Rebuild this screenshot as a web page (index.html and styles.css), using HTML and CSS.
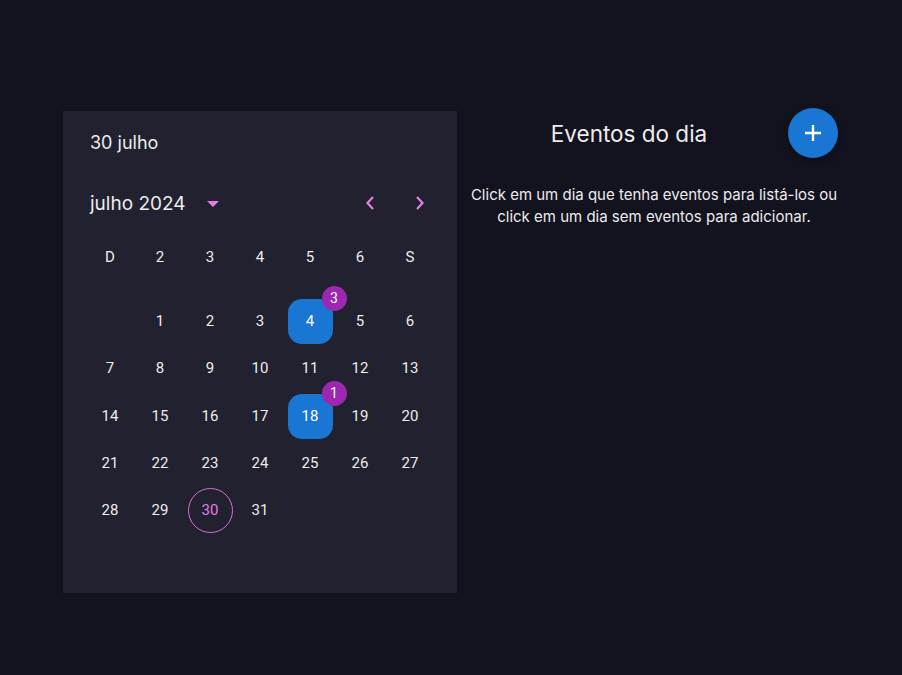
FILE: index.html
```html
<!DOCTYPE html>
<html lang="pt">
<head>
<meta charset="utf-8">
<link rel="stylesheet" href="styles.css">
</head>
<body>
<div class="page">
  <section class="calendar">
    <div class="selected">30 julho</div>
    <div class="month-bar">
      <div class="month-label">julho 2024</div>
      <svg class="drop" width="12" height="6" viewBox="0 0 12 6"><path d="M0 0 L12 0 L6 6 Z" fill="#e27ee6"/></svg>
      <div class="nav">
        <svg width="10" height="16" viewBox="0 0 10 16"><path d="M8 2 L2.5 8 L8 14" fill="none" stroke="#e27ee6" stroke-width="2.2"/></svg>
        <svg width="10" height="16" viewBox="0 0 10 16"><path d="M2 2 L7.5 8 L2 14" fill="none" stroke="#e27ee6" stroke-width="2.2"/></svg>
      </div>
    </div>
    <div class="weekdays">
      <span>D</span><span>2</span><span>3</span><span>4</span><span>5</span><span>6</span><span>S</span>
    </div>
    <div class="days">
      <span></span><span>1</span><span>2</span><span>3</span><span class="event">4<b class="badge">3</b></span><span>5</span><span>6</span>
      <span>7</span><span>8</span><span>9</span><span>10</span><span>11</span><span>12</span><span>13</span>
      <span>14</span><span>15</span><span>16</span><span>17</span><span class="event">18<b class="badge">1</b></span><span>19</span><span>20</span>
      <span>21</span><span>22</span><span>23</span><span>24</span><span>25</span><span>26</span><span>27</span>
      <span>28</span><span>29</span><span class="today">30</span><span>31</span>
    </div>
  </section>
  <section class="events">
    <div class="events-head">
      <h2 class="title">Eventos do dia</h2>
      <button class="add" type="button">
        <svg width="20" height="20" viewBox="0 0 20 20"><path d="M10 2 V18 M2 10 H18" stroke="#fff" stroke-width="2.4" fill="none"/></svg>
      </button>
    </div>
    <p class="hint">Click em um dia que tenha eventos para listá-los ou click em um dia sem eventos para adicionar.</p>
  </section>
</div>
</body>
</html>
```
FILE: styles.css
```css
html, body {
  margin: 0;
  background: #13121f;
  color: #ececec;
}
.page {
  display: flex;
  padding: 111px 0 0 63px;
}
.calendar {
  box-sizing: border-box;
  width: 394px;
  height: 482px;
  background: #22212f;
  padding: 21px 22px 0;
  font-family: Roboto, "Liberation Sans", sans-serif;
}
.selected {
  font-family: Inter, "Noto Sans", sans-serif;
  font-size: 18px;
  line-height: 22px;
  padding-left: 5px;
}
.month-bar {
  display: flex;
  align-items: center;
  height: 40px;
  margin-top: 29px;
  padding-left: 5px;
}
.month-label {
  font-size: 19px;
  font-family: Inter, "Noto Sans", sans-serif;
}
.drop {
  margin-left: 21px;
  margin-top: 2px;
}
.nav {
  margin-left: auto;
  display: flex;
  gap: 40px;
  margin-right: 10px;
}
.weekdays, .days {
  display: grid;
  grid-template-columns: repeat(7, 50px);
}
.weekdays {
  margin-top: 14px;
  height: 40px;
  align-items: center;
  font-size: 15px;
}
.weekdays span, .days span {
  text-align: center;
}
.days {
  margin-top: 22px;
  grid-auto-rows: 47.25px;
  font-size: 15px;
}
.days span {
  position: relative;
  justify-self: center;
  width: 45px;
  height: 45px;
  line-height: 45px;
  box-sizing: border-box;
}
.days .event {
  background: #1976d2;
  border-radius: 14px;
  color: #fff;
}
.days .today {
  border: 1px solid #d86bdc;
  border-radius: 50%;
  color: #e27ee6;
  line-height: 43px;
}
.badge {
  position: absolute;
  top: -13px;
  right: -14px;
  width: 25px;
  height: 25px;
  border-radius: 50%;
  background: #9c27b0;
  color: #fff;
  font-weight: 400;
  font-size: 14px;
  line-height: 25px;
  text-align: center;
}
.events {
  width: 392px;
  margin-left: 1px;
  font-family: Inter, "Noto Sans", sans-serif;
}
.events-head {
  display: flex;
  align-items: center;
  padding: 0 12px 0 12px;
  margin-top: -3px;
}
.title {
  flex: 1;
  margin: 0;
  text-align: center;
  font-size: 22.5px;
  font-weight: 400;
}
.add {
  width: 50px;
  height: 50px;
  border: none;
  border-radius: 50%;
  background: #1976d2;
  display: flex;
  align-items: center;
  justify-content: center;
  box-shadow: 0 3px 6px rgba(0,0,0,0.35);
  padding: 0;
}
.hint {
  margin: 26px 0 0;
  text-align: center;
  font-size: 15px;
  line-height: 22px;
}
```
